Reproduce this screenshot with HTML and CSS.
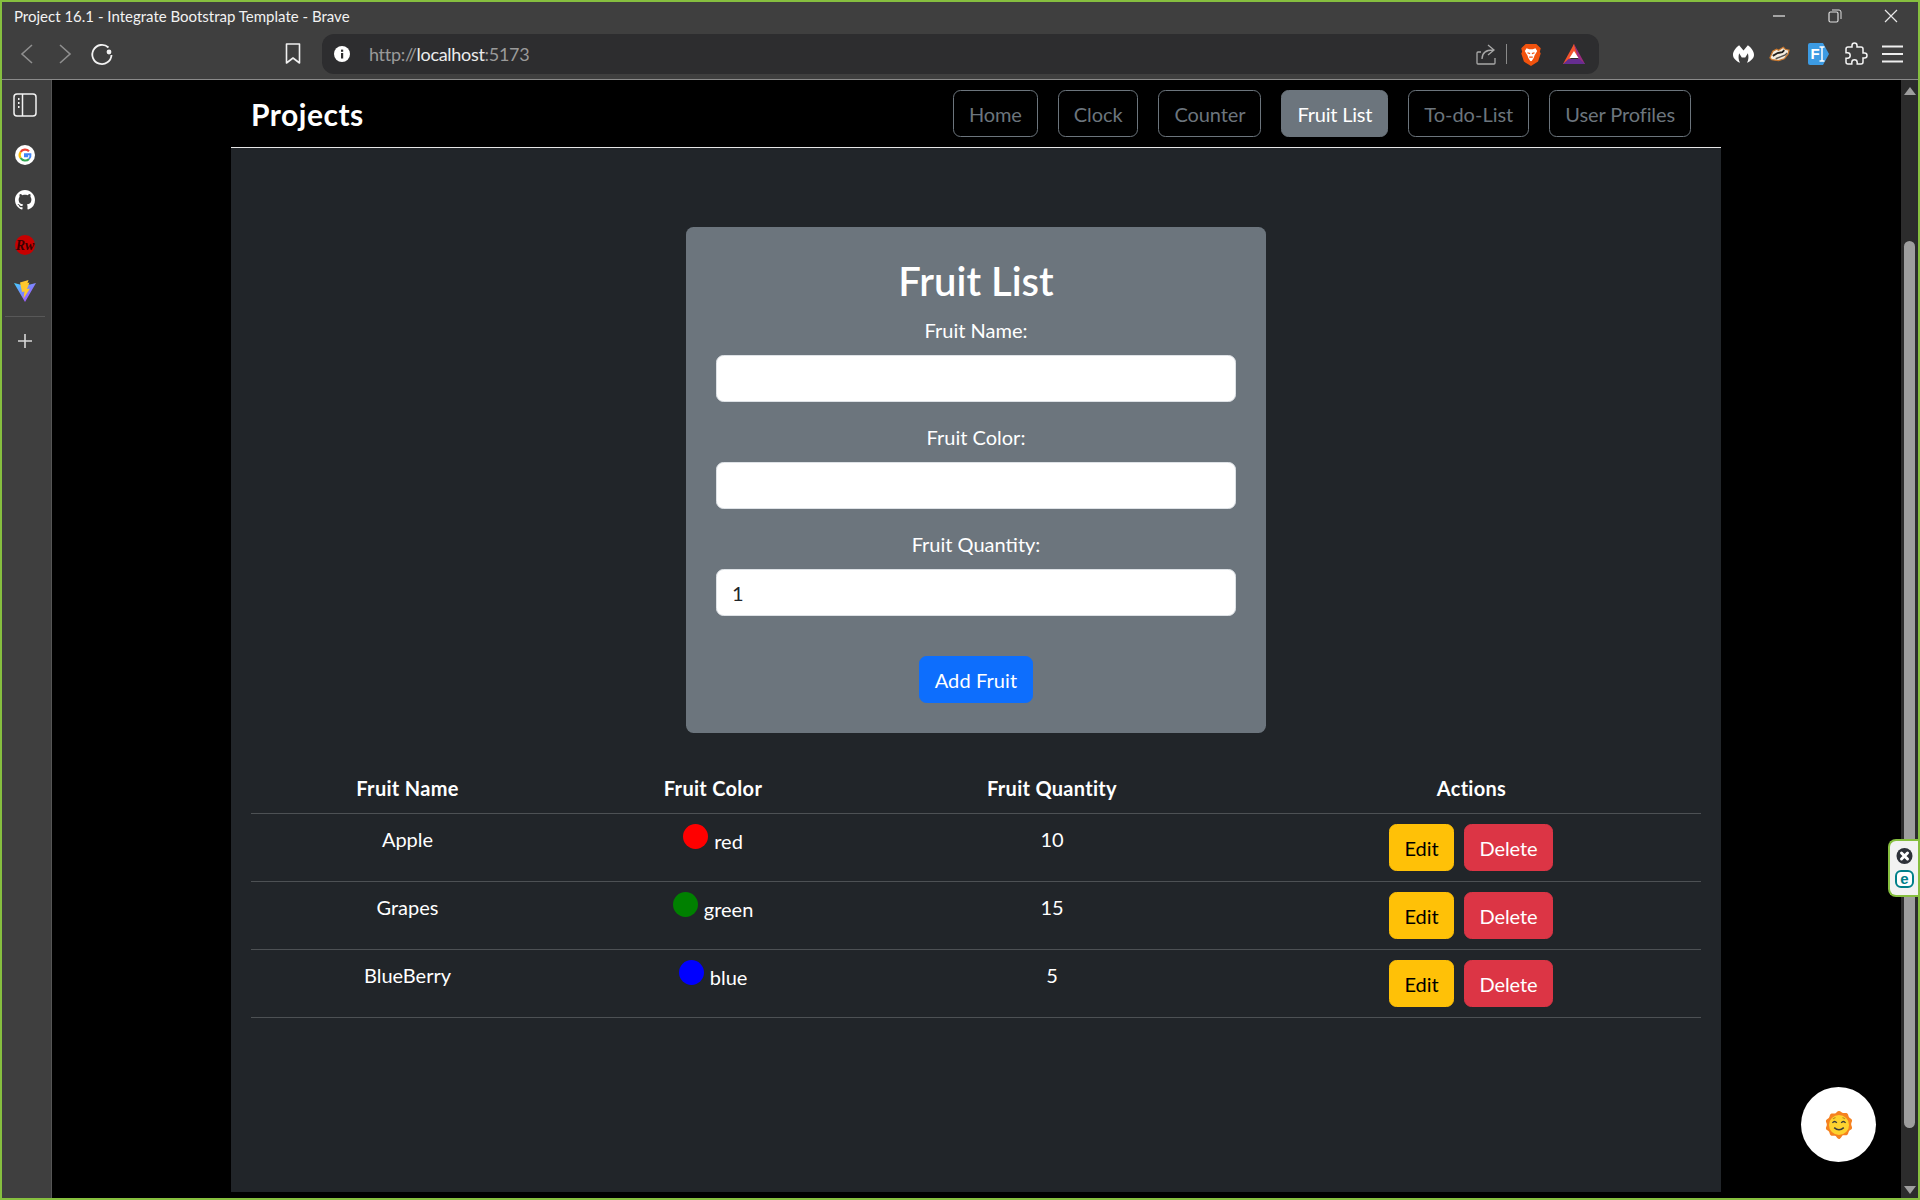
FILE: index.html
```html
<!DOCTYPE html>
<html lang="en">
<head>
    <meta charset="UTF-8">
    <title>Project 16.1 - Integrate Bootstrap Template - Brave</title>
    <link rel="stylesheet" href="styles.css">
</head>
<body>
<div class="window">
    <div class="titlebar">
        <span class="title-text">Project 16.1 - Integrate Bootstrap Template - Brave</span>
        <div class="window-controls">
            <svg width="14" height="14" viewBox="0 0 14 14"><path d="M1 7h12" stroke="#e8e8e8" stroke-width="1.2"/></svg>
            <svg width="14" height="16" viewBox="0 0 14 16"><rect x="1" y="4" width="9" height="10" rx="1.5" fill="none" stroke="#e0e0e0" stroke-width="1.2"/><path d="M4 2h7a2 2 0 0 1 2 2v7" fill="none" stroke="#e0e0e0" stroke-width="1"/></svg>
            <svg width="14" height="14" viewBox="0 0 14 14"><path d="M1 1l12 12M13 1L1 13" stroke="#e8e8e8" stroke-width="1.2"/></svg>
        </div>
    </div>

    <div class="toolbar">
        <div class="nav-icons">
            <svg width="16" height="24" viewBox="0 0 16 24"><path d="M13 3L3 12l10 9" fill="none" stroke="#8f8f8f" stroke-width="1.6"/></svg>
            <svg width="16" height="24" viewBox="0 0 16 24"><path d="M3 3l10 9-10 9" fill="none" stroke="#8f8f8f" stroke-width="1.6"/></svg>
            <svg width="24" height="24" viewBox="0 0 24 24"><path d="M18.5 5.5A9.6 9.6 0 1 0 21.5 13" fill="none" stroke="#f2f2f2" stroke-width="1.8"/><circle cx="19" cy="10" r="2.4" fill="#f2f2f2"/></svg>
        </div>
        <svg class="bookmark" width="18" height="24" viewBox="0 0 18 24"><path d="M2.5 2h13v19l-6.500-5-6.500 5z" fill="none" stroke="#f0f0f0" stroke-width="1.6" stroke-linejoin="round"/></svg>
        <div class="address-bar">
            <svg class="info-icon" width="16" height="16" viewBox="0 0 16 16"><circle cx="8" cy="8" r="8" fill="#fff"/><rect x="7" y="7" width="2.200" height="5.500" fill="#2d2d2f"/><rect x="7" y="3.600" width="2.200" height="2.200" fill="#2d2d2f"/></svg>
            <span class="url"><span class="url-dim">http://</span>localhost<span class="url-dim">:5173</span></span>
            <div class="address-right">
                <svg width="22" height="24" viewBox="0 0 22 24"><path d="M6 10H3a1 1 0 0 0-1 1v10a1 1 0 0 0 1 1h16a1 1 0 0 0 1-1v-5" fill="none" stroke="#a8a8a8" stroke-width="1.300"/><path d="M7 17c0-6 4-9 11-9M13 3l6 5-6 5" fill="none" stroke="#a8a8a8" stroke-width="1.300"/></svg>
                <span class="address-sep"></span>
                <svg class="brave-icon" width="20" height="23" viewBox="0 0 22 26"><path d="M5 1h12l3 3 2 2-1 4 1 2-3 9-8 5-8-5-3-9 1-2-1-4 2-2z" fill="#f1520d"/><path d="M6 6l3 1h4l3-1 2 3-3 5-1 3-2 3-1 .5L10 20l-2-3-1-3-3-5z" fill="#fff"/><path d="M7 11l3 1M15 11l-3 1M9 16h4" stroke="#f1520d" stroke-width="1.300"/></svg>
                <svg class="bat-icon" width="22" height="20" viewBox="0 0 22 20"><path d="M11 0L0 20h5.500L11 5z" fill="#f3532d"/><path d="M11 0l-5 14h10z" fill="#f3532d"/><path d="M11 0l11 20h-5.500z" fill="#9b2c80"/><path d="M0 20l5.500-5h11l5.500 5z" fill="#662d91"/><path d="M11 7l4.500 7h-9z" fill="#fff"/></svg>
            </div>
        </div>
        <div class="extensions">
            <svg width="21" height="18" viewBox="0 0 24 20"><path d="M7 0l5 6 5-6c4 3 7 7 7 11 0 4-4 7-8 9 2-4 2-7 1-11l-3 5h-4L7 9c-1 4-1 7 1 11-4-2-8-5-8-9 0-4 3-8 7-11z" fill="#fff"/></svg>
            <svg width="21" height="16" viewBox="0 0 22 16"><path d="M1 12l3-7 4-2 2 1 5-3 2 2 4 1-1 4-4 5-6 2-7-1z" fill="#f4ecdf" stroke="#c8772d" stroke-width="1.300"/><path d="M4 10l5-3 5-1 2-2" fill="none" stroke="#23211f" stroke-width="2"/><path d="M7 13l5-2 5-2 2-2" fill="none" stroke="#55524e" stroke-width="1.600"/></svg>
            <svg class="ext-fi" width="21" height="22" viewBox="0 0 21 22"><path d="M2 0h13l6 11-6 11H2a2 2 0 0 1-2-2V2a2 2 0 0 1 2-2z" fill="#3c9be3"/><text x="2.500" y="16" class="fi-text">F</text><path d="M11.500 4h5M11.500 18h5M14 4v14" stroke="#fff" stroke-width="1.500"/></svg>
            <svg width="24" height="24" viewBox="0 0 24 24"><path d="M20.500 11H19V7c0-1.100-.9-2-2-2h-4V3.500C13 2.120 11.880 1 10.500 1S8 2.120 8 3.500V5H4c-1.100 0-1.990.9-1.990 2v3.800H3.500c1.490 0 2.700 1.210 2.700 2.700s-1.210 2.700-2.700 2.700H2V20c0 1.100.9 2 2 2h3.800v-1.500c0-1.490 1.210-2.700 2.700-2.700 1.490 0 2.700 1.210 2.700 2.700V22H17c1.100 0 2-.9 2-2v-4h1.500c1.380 0 2.500-1.120 2.500-2.500S21.880 11 20.500 11z" fill="none" stroke="#f4f4f4" stroke-width="1.500"/></svg>
            <svg class="ext-menu" width="22" height="20" viewBox="0 0 22 20"><path d="M0 2.500h21M0 10h21M0 17.500h21" stroke="#eee" stroke-width="1.800"/></svg>
        </div>
    </div>

    <div class="browser-body">
        <div class="sidebar">
            <svg width="24" height="24" viewBox="0 0 24 24"><rect x="1" y="1" width="22" height="22" rx="3" fill="none" stroke="#f2f2f2" stroke-width="1.500"/><path d="M9.500 1v22" stroke="#f2f2f2" stroke-width="1.500"/><path d="M5 6h1.500M5 10h1.500M5 14h1.500" stroke="#f2f2f2" stroke-width="2"/></svg>
            <svg width="20" height="20" viewBox="0 0 20 20"><circle cx="10" cy="10" r="10" fill="#fff"/><path d="M14 6.200A5.400 5.400 0 0 0 5.600 7" fill="none" stroke="#ea4335" stroke-width="2.200"/><path d="M5.600 7a5.400 5.400 0 0 0 0 6" fill="none" stroke="#fbbc05" stroke-width="2.200"/><path d="M5.600 13a5.400 5.400 0 0 0 8.400.9" fill="none" stroke="#34a853" stroke-width="2.200"/><path d="M14 13.900a5.400 5.400 0 0 0 1.400-4.700H10v2h3.200" fill="none" stroke="#4285f4" stroke-width="2"/></svg>
            <svg width="20" height="20" viewBox="0 0 16 16"><path fill="#fff" d="M8 0C3.580 0 0 3.580 0 8c0 3.540 2.290 6.530 5.470 7.590.4.070.55-.17.55-.38 0-.19-.01-.82-.01-1.490-2.010.37-2.530-.49-2.690-.94-.09-.23-.48-.94-.82-1.130-.28-.15-.68-.52-.01-.53.63-.01 1.080.58 1.230.82.72 1.210 1.870.87 2.330.66.070-.52.28-.87.51-1.070-1.780-.2-3.640-.89-3.640-3.950 0-.87.31-1.590.82-2.150-.08-.2-.36-1.020.08-2.120 0 0 .67-.21 2.200.82.64-.18 1.320-.27 2-.27.68 0 1.360.09 2 .27 1.530-1.040 2.200-.82 2.200-.82.44 1.100.16 1.920.08 2.120.51.56.82 1.270.82 2.150 0 3.070-1.870 3.750-3.650 3.950.29.25.54.73.54 1.480 0 1.070-.01 1.930-.01 2.200 0 .21.15.46.55.38A8.013 8.013 0 0 0 16 8c0-4.420-3.580-8-8-8z"/></svg>
            <svg width="20" height="20" viewBox="0 0 20 20"><circle cx="10" cy="10" r="10" fill="#c80000"/><text x="10" y="14.500" class="rw-text">Rw</text></svg>
            <svg width="22" height="22" viewBox="0 0 22 22"><defs><linearGradient id="viteGrad" x1="0" y1="0" x2="1" y2="1"><stop offset="0" stop-color="#41d1ff"/><stop offset="1" stop-color="#bd34fe"/></linearGradient></defs><path d="M0 3l11 19L22 3l-6 1.500H6z" fill="url(#viteGrad)"/><path d="M14.500 0L6 2.500 8 12l2.500-.5-1 7 6.500-10-3 .5 2.500-6.500-2 .5z" fill="#ffc82c"/></svg>
            <span class="sidebar-sep"></span>
            <svg width="16" height="16" viewBox="0 0 16 16"><path d="M8 1v14M1 8h14" stroke="#d8d8d8" stroke-width="1.600"/></svg>
        </div>

        <div class="viewport">
            <div class="container">
                <header class="site-header">
                    <h1 class="brand">Projects</h1>
                    <nav class="site-nav">
                        <a class="btn btn-outline">Home</a>
                        <a class="btn btn-outline">Clock</a>
                        <a class="btn btn-outline">Counter</a>
                        <a class="btn btn-active">Fruit List</a>
                        <a class="btn btn-outline btn-todo">To-do-List</a>
                        <a class="btn btn-outline">User Profiles</a>
                    </nav>
                </header>

                <main class="panel">
                    <form class="fruit-form">
                        <h2>Fruit List</h2>
                        <label for="fruitName">Fruit Name:</label>
                        <input type="text" id="fruitName">
                        <label for="fruitColor">Fruit Color:</label>
                        <input type="text" id="fruitColor">
                        <label for="fruitQuantity">Fruit Quantity:</label>
                        <input type="text" id="fruitQuantity" value="1">
                        <button type="button" class="btn btn-primary">Add Fruit</button>
                    </form>

                    <table class="fruit-table">
                        <thead>
                            <tr>
                                <th class="col-name">Fruit Name</th>
                                <th class="col-color">Fruit Color</th>
                                <th class="col-qty">Fruit Quantity</th>
                                <th class="col-actions">Actions</th>
                            </tr>
                        </thead>
                        <tbody>
                            <tr>
                                <td>Apple</td>
                                <td><span class="dot dot-red"></span> red</td>
                                <td>10</td>
                                <td class="cell-actions"><button class="btn btn-warning">Edit</button><button class="btn btn-danger">Delete</button></td>
                            </tr>
                            <tr>
                                <td>Grapes</td>
                                <td><span class="dot dot-green"></span> green</td>
                                <td>15</td>
                                <td class="cell-actions"><button class="btn btn-warning">Edit</button><button class="btn btn-danger">Delete</button></td>
                            </tr>
                            <tr>
                                <td>BlueBerry</td>
                                <td><span class="dot dot-blue"></span> blue</td>
                                <td>5</td>
                                <td class="cell-actions"><button class="btn btn-warning">Edit</button><button class="btn btn-danger">Delete</button></td>
                            </tr>
                        </tbody>
                    </table>
                </main>
            </div>
        </div>

        <div class="scrollbar">
            <span class="arrow-up"></span>
            <div class="scroll-track"><div class="scroll-thumb"></div></div>
            <span class="arrow-down"></span>
        </div>

        <div class="eset-tab">
            <svg width="17" height="16" viewBox="0 0 16 16"><circle cx="8" cy="8" r="8" fill="#2d3138"/><path d="M5 5l6 6M11 5l-6 6" stroke="#fff" stroke-width="3" stroke-linecap="round"/></svg>
            <svg width="19" height="18" viewBox="0 0 19 18"><rect x="1" y="1" width="17" height="16" rx="5" fill="#fff" stroke="#00808a" stroke-width="2"/><text x="9.500" y="13.500" class="eset-text">e</text></svg>
        </div>

        <div class="chat-button">
            <svg width="28" height="30" viewBox="0 0 32 32">
                <path d="M16 0c2 0 3 2 4.500 2.300 1.800.3 3.600-.6 5 .5 1.300 1 1 3 2 4.300.9 1.200 2.900 1.600 3.400 3.200.4 1.600-1 3.100-1 4.700s1.400 3.100 1 4.700c-.5 1.600-2.500 2-3.400 3.200-1 1.300-.7 3.300-2 4.300-1.400 1.100-3.200.2-5 .5C19 28.500 18 32 16 32s-3-3.500-4.500-3.700c-1.800-.3-3.600.6-5-.5-1.300-1-1-3-2-4.300-.9-1.200-2.900-1.600-3.400-3.200-.4-1.600 1-3.100 1-4.700s-1.400-3.100-1-4.700c.5-1.600 2.500-2 3.400-3.200 1-1.300.7-3.300 2-4.300 1.400-1.100 3.200-.2 5-.5C13 2.300 14 0 16 0z" fill="#f58220"/>
                <circle cx="16" cy="16" r="11.500" fill="#fdd22f"/>
                <path d="M8.500 13.500q2.500-3 5 0M18.500 13.500q2.500-3 5 0" fill="none" stroke="#3a3a3a" stroke-width="1.500"/>
                <path d="M9 9l3-1.500M23 9l-3-1.500" fill="none" stroke="#b98a1a" stroke-width="1.200"/>
                <path d="M10.500 19q5.500 5 11 0" fill="none" stroke="#3a3a3a" stroke-width="1.700"/>
            </svg>
        </div>
    </div>
</div>
</body>
</html>
```

FILE: styles.css
```css
* {
    box-sizing: border-box;
}

html, body {
    margin: 0;
    padding: 0;
}

body {
    font-family: 'Lato', 'Noto Sans', sans-serif;
    font-size: 20px;
    line-height: 30px;
    color: #fff;
    background-color: #000;
}

.window {
    width: 1920px;
    height: 1200px;
    display: flex;
    flex-direction: column;
    border: 2px solid #86bf3f;
    overflow: hidden;
    background-color: #3f3f3f;
}

/* browser chrome */
.titlebar {
    height: 32px;
    flex: none;
    display: flex;
    align-items: center;
    justify-content: space-between;
    padding-left: 12px;
    padding-bottom: 4px;
}

.title-text {
    font-size: 15px;
    line-height: 20px;
    color: #f2f2f2;
}

.window-controls {
    display: flex;
    align-items: center;
    gap: 42px;
    padding-right: 20px;
}

.toolbar {
    height: 46px;
    flex: none;
    display: flex;
    align-items: center;
    border-bottom: 1px solid #8a8a8a;
    padding-left: 17px;
    padding-bottom: 5px;
}

.nav-icons {
    display: flex;
    align-items: center;
    gap: 22px;
    width: 248px;
}

.nav-icons svg:last-child {
    margin-left: -5px;
}

.bookmark {
    margin-left: 17px;
    width: 18px;
}

.address-bar {
    width: 1277px;
    height: 40px;
    margin-left: 20px;
    flex: none;
    display: flex;
    align-items: center;
    background-color: #2d2d2f;
    border-radius: 12px;
    padding-left: 12px;
    padding-right: 14px;
}

.url {
    margin-left: 19px;
    font-size: 18px;
    letter-spacing: -0.3px;
    color: #ececec;
}

.url-dim {
    color: #9a9a9a;
}

.address-right {
    margin-left: auto;
    display: flex;
    align-items: center;
}

.address-sep {
    width: 1px;
    height: 20px;
    background-color: #8a8a8a;
    margin-left: 9px;
}

.brave-icon {
    margin-left: 14px;
}

.bat-icon {
    margin-left: 22px;
}

.extensions {
    display: flex;
    align-items: center;
    gap: 15px;
    margin-left: 134px;
}

.ext-fi {
    margin-left: 3px;
}

.ext-menu {
    margin-left: -1px;
}

.fi-text {
    font-family: 'Liberation Sans', sans-serif;
    font-size: 15px;
    font-weight: bold;
    fill: #fff;
}

/* sidebar */
.browser-body {
    flex: 1;
    min-height: 0;
    display: flex;
    position: relative;
    background-color: #000;
}

.sidebar {
    width: 50px;
    flex: none;
    display: flex;
    flex-direction: column;
    align-items: center;
    gap: 25px;
    padding-top: 13px;
    padding-right: 4px;
    background-color: #3f3f3f;
    border-right: 1px solid #555;
}

.sidebar svg:first-child {
    margin-bottom: 3px;
}

.rw-text {
    font-family: 'Liberation Serif', serif;
    font-size: 14px;
    font-style: italic;
    font-weight: bold;
    fill: #3a0000;
    text-anchor: middle;
}

.sidebar-sep {
    width: 40px;
    height: 1px;
    background-color: #585858;
    margin-top: -11px;
    margin-bottom: -9px;
}

/* page */
.viewport {
    flex: 1;
    min-width: 0;
}

.container {
    width: 1490px;
    margin-left: 179px;
}

.site-header {
    height: 68px;
    display: flex;
    align-items: center;
    justify-content: space-between;
    padding: 0 30px 0 20px;
    border-bottom: 1px solid #e6e6e6;
}

.brand {
    margin: 0;
    font-size: 30px;
    line-height: 36px;
    font-weight: 700;
    letter-spacing: 0.5px;
}

.site-nav {
    display: flex;
    gap: 20px;
}

.btn {
    display: inline-block;
    font-family: inherit;
    font-size: 20px;
    line-height: 30px;
    padding: 7.5px 15px;
    border: 1px solid transparent;
    border-radius: 7.5px;
    text-align: center;
    letter-spacing: -0.1px;
    color: #fff;
    background: none;
}

.btn-outline {
    color: #6c757d;
    border-color: #6c757d;
}

.btn-todo {
    letter-spacing: 0;
}

.btn-active {
    letter-spacing: -0.2px;
    background-color: #6c757d;
    border-color: #6c757d;
}

.btn-primary {
    letter-spacing: 0.1px;
    background-color: #0d6efd;
    border-color: #0d6efd;
}

.btn-warning {
    width: 65px;
    padding: 7.5px 0;
    color: #000;
    background-color: #ffc107;
    border-color: #ffc107;
}

.btn-danger {
    width: 89px;
    padding: 7.5px 0;
    background-color: #dc3545;
    border-color: #dc3545;
    margin-left: 10px;
}

.panel {
    height: 1044px;
    padding: 79px 20px 0;
    background-color: #212529;
}

.fruit-form {
    width: 580px;
    height: 506px;
    margin: 0 auto 30px;
    padding: 30px;
    display: flex;
    flex-direction: column;
    align-items: center;
    background-color: #6c757d;
    border-radius: 7.5px;
}

.fruit-form h2 {
    margin: 0 0 10px;
    font-size: 40px;
    line-height: 48px;
    font-weight: 600;
}

.fruit-form label {
    margin-bottom: 10px;
}

.fruit-form input {
    width: 100%;
    height: 47px;
    margin-bottom: 20px;
    padding: 7.5px 15px;
    font-family: inherit;
    font-size: 20px;
    color: #212529;
    background-color: #fff;
    border: 1px solid #dee2e6;
    border-radius: 7.5px;
}

.fruit-form .btn {
    margin-top: 20px;
}

.fruit-table {
    width: 1450px;
    border-collapse: collapse;
    table-layout: fixed;
    text-align: center;
}

.fruit-table th, .fruit-table td {
    padding: 10px;
    border-bottom: 1px solid #4d5154;
    vertical-align: top;
}

.fruit-table th {
    letter-spacing: 0.3px;
}

.fruit-table .cell-actions {
    padding-right: 11px;
}

.col-name { width: 313px; }
.col-color { width: 298px; }
.col-qty { width: 380px; }
.col-actions { width: 459px; }

.dot {
    display: inline-block;
    width: 25px;
    height: 25px;
    margin-right: 1px;
    border-radius: 50%;
}

.dot-red { background-color: #f00; }
.dot-green { background-color: #008000; }
.dot-blue { background-color: #00f; }

/* scrollbar */
.scrollbar {
    width: 17px;
    flex: none;
    display: flex;
    flex-direction: column;
    align-items: center;
    background-color: #2c2c2c;
    padding-top: 7px;
    padding-bottom: 4px;
}

.arrow-up, .arrow-down {
    width: 0;
    height: 0;
    flex: none;
    border-left: 6px solid transparent;
    border-right: 6px solid transparent;
}

.arrow-up {
    border-bottom: 8px solid #9e9e9e;
}

.arrow-down {
    border-top: 8px solid #9e9e9e;
}

.scroll-track {
    flex: 1;
    width: 100%;
    display: flex;
    justify-content: center;
    padding-top: 146px;
    padding-bottom: 58px;
}

.scroll-thumb {
    width: 11px;
    border-radius: 6px;
    background-color: #9e9e9e;
}

/* overlays */
.eset-tab {
    position: absolute;
    right: 0;
    top: 759px;
    width: 30px;
    height: 58px;
    display: flex;
    flex-direction: column;
    align-items: center;
    gap: 6px;
    padding-top: 7px;
    background-color: #f2f2f2;
    border: 2px solid #86bf3f;
    border-right: none;
    border-radius: 8px 0 0 8px;
}

.eset-text {
    font-family: 'Liberation Sans', sans-serif;
    font-size: 15px;
    font-weight: bold;
    fill: #00808a;
    text-anchor: middle;
}

.chat-button {
    position: absolute;
    left: 1799px;
    top: 1007px;
    width: 75px;
    height: 75px;
    display: flex;
    align-items: center;
    justify-content: center;
    background-color: #fff;
    border-radius: 50%;
}
```
